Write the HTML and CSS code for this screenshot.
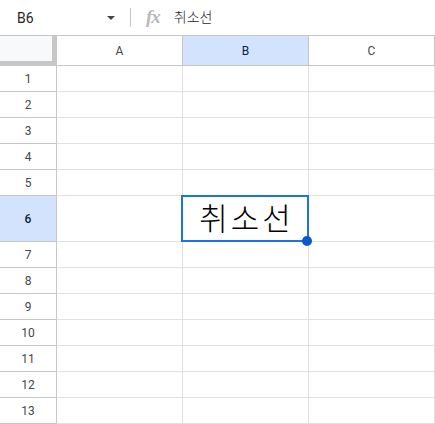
FILE: index.html
```html
<!DOCTYPE html>
<html lang="ko">
<head>
<meta charset="utf-8">
<link rel="stylesheet" href="styles.css">
</head>
<body>
<div class="formula-bar">
  <div class="name-box">B6</div>
  <div class="name-arrow"></div>
  <div class="sep"></div>
  <div class="fx">fx</div>
  <div class="formula-text">취소선</div>
</div>
<div class="sheet">
  <div class="corner"></div>
  <div class="col-h first">A</div>
  <div class="col-h sel">B</div>
  <div class="col-h">C</div>

  <div class="row-h">1</div><div class="cell"></div><div class="cell"></div><div class="cell"></div>
  <div class="row-h">2</div><div class="cell"></div><div class="cell"></div><div class="cell"></div>
  <div class="row-h">3</div><div class="cell"></div><div class="cell"></div><div class="cell"></div>
  <div class="row-h">4</div><div class="cell"></div><div class="cell"></div><div class="cell"></div>
  <div class="row-h">5</div><div class="cell"></div><div class="cell"></div><div class="cell"></div>
  <div class="row-h sel">6</div><div class="cell"></div><div class="cell active"><span class="big">취소선</span><div class="sel-box"></div><div class="handle"></div></div><div class="cell"></div>
  <div class="row-h">7</div><div class="cell"></div><div class="cell"></div><div class="cell"></div>
  <div class="row-h">8</div><div class="cell"></div><div class="cell"></div><div class="cell"></div>
  <div class="row-h">9</div><div class="cell"></div><div class="cell"></div><div class="cell"></div>
  <div class="row-h">10</div><div class="cell"></div><div class="cell"></div><div class="cell"></div>
  <div class="row-h">11</div><div class="cell"></div><div class="cell"></div><div class="cell"></div>
  <div class="row-h">12</div><div class="cell"></div><div class="cell"></div><div class="cell"></div>
  <div class="row-h">13</div><div class="cell"></div><div class="cell"></div><div class="cell"></div>
</div>
</body>
</html>
```
FILE: styles.css
```css
html, body {
  margin: 0;
  padding: 0;
  background: #ffffff;
  font-family: Roboto, "Liberation Sans", "Noto Sans CJK KR", sans-serif;
  overflow: hidden;
}
.formula-bar {
  height: 35px;
  border-bottom: 1px solid #c4c7c5;
  display: flex;
  align-items: center;
}
.name-box {
  width: 90px;
  padding-left: 17px;
  font-size: 14px;
  color: #1f1f1f;
}
.name-arrow {
  width: 0;
  height: 0;
  border-left: 4.5px solid transparent;
  border-right: 4.5px solid transparent;
  border-top: 4.5px solid #444746;
  margin-top: 1px;
}
.sep {
  width: 1px;
  height: 19px;
  background: #c4c7c5;
  margin-left: 15px;
}
.fx {
  margin-left: 15px;
  font-family: "Liberation Serif", serif;
  font-style: italic;
  font-weight: bold;
  font-size: 19px;
  color: #b9b9b9;
  letter-spacing: -1px;
  margin-top: -2px;
}
.formula-text {
  margin-left: 14px;
  font-family: "Noto Sans CJK KR", sans-serif;
  font-weight: 300;
  font-size: 14px;
  color: #1f1f1f;
  margin-top: -3px;
}
.sheet {
  display: grid;
  grid-template-columns: 57px 126px 126px 126px;
  grid-template-rows: 30px repeat(5, 26px) 46px repeat(7, 26px);
}
.corner {
  background: #f8f9fa;
  border-right: 4px solid #c7c7c7;
  border-bottom: 5px solid #c7c7c7;
  box-sizing: border-box;
  margin-right: 1px;
}
.col-h {
  box-sizing: border-box;
  border-right: 1px solid #c4c7c5;
  border-bottom: 1px solid #c4c7c5;
  display: flex;
  align-items: center;
  justify-content: center;
  font-size: 12px;
  color: #444746;
  padding-top: 1px;
}
.col-h.first { border-left: 1px solid #c4c7c5; margin-left: -1px; }
.col-h.sel {
  background: #d3e3fd;
  color: #0b1f3f;
}
.row-h {
  box-sizing: border-box;
  border-right: 1px solid #c4c7c5;
  border-bottom: 1px solid #c4c7c5;
  display: flex;
  align-items: center;
  justify-content: center;
  font-size: 12px;
  color: #444746;
}
.row-h.sel {
  background: #d3e3fd;
  color: #0b1f3f;
  font-weight: 500;
}
.cell {
  box-sizing: border-box;
  border-right: 1px solid #e1e1e1;
  border-bottom: 1px solid #e1e1e1;
}
.active {
  position: relative;
  display: flex;
  align-items: center;
  justify-content: center;
}
.big {
  font-family: "Noto Sans CJK KR", sans-serif;
  font-weight: 300;
  font-size: 31px;
  color: #000000;
  letter-spacing: 3px;
  line-height: 1;
  margin-top: -4px;
  margin-left: 2px;
}
.sel-box {
  position: absolute;
  left: -2px;
  top: -1px;
  width: 128px;
  height: 47px;
  box-sizing: border-box;
  border: 2px solid #1a73e8;
}
.handle {
  position: absolute;
  left: 119px;
  top: 40px;
  width: 10px;
  height: 10px;
  border-radius: 50%;
  background: #0b57d0;
  z-index: 2;
}
```
